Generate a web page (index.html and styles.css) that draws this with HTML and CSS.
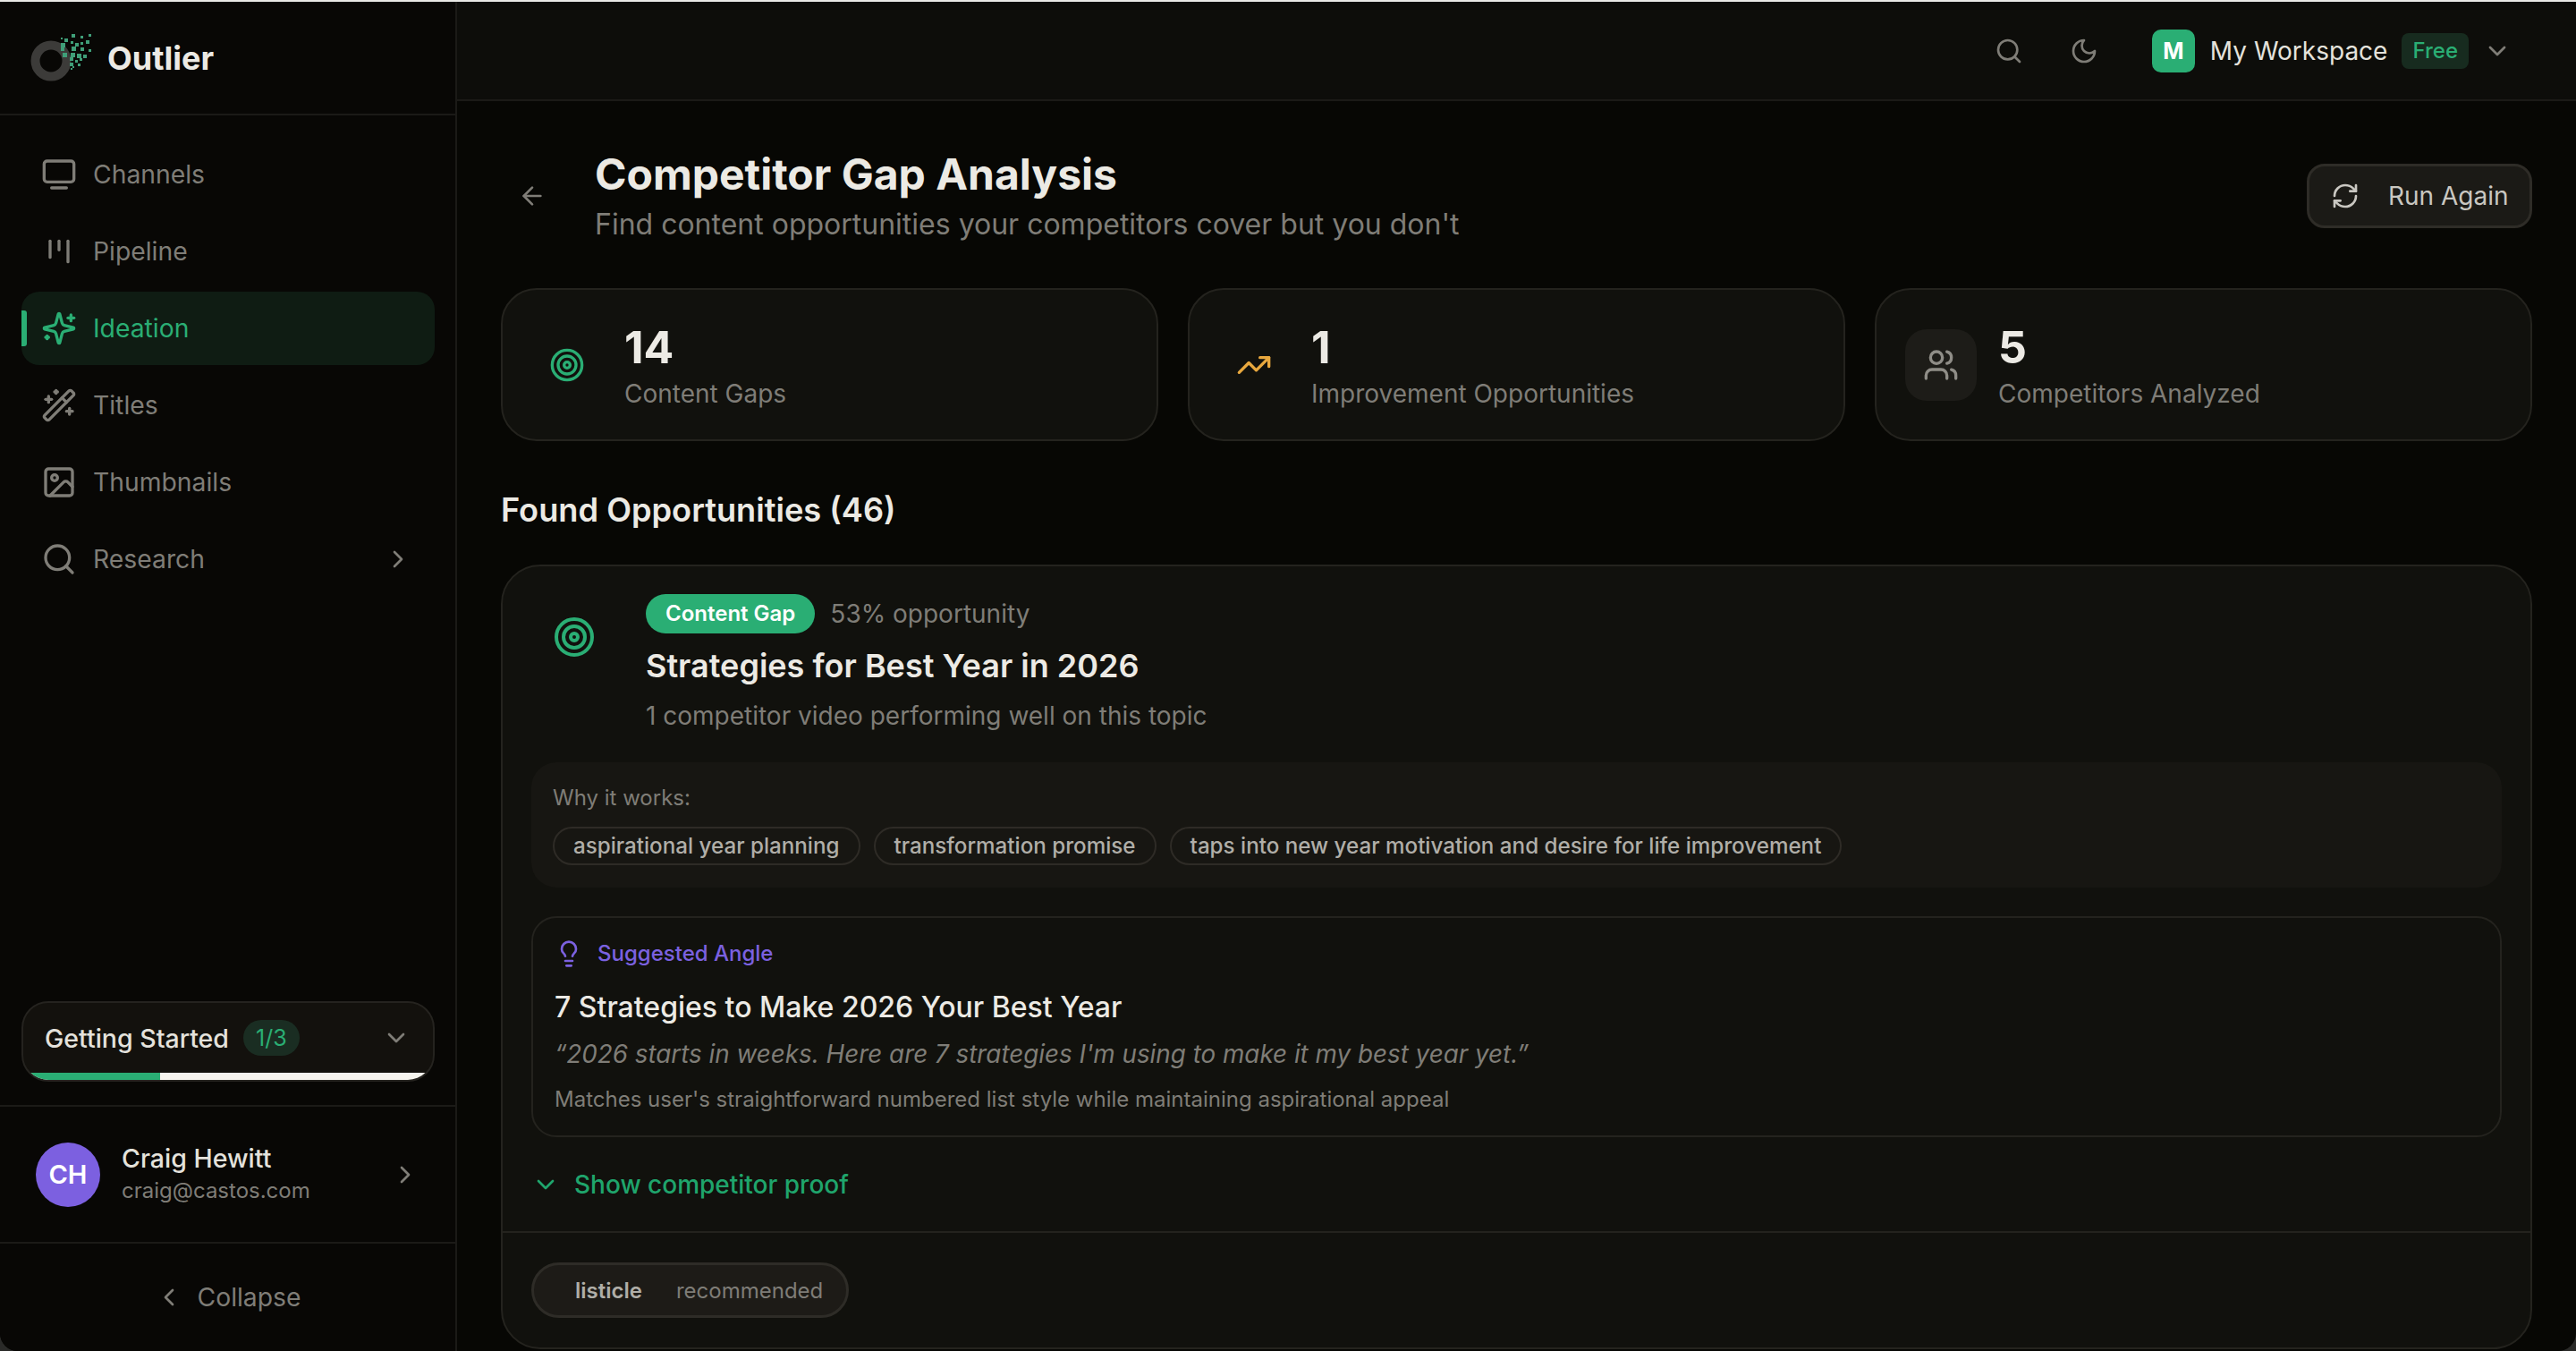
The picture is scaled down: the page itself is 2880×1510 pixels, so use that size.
FILE: index.html
```html
<!DOCTYPE html>
<html lang="en">
<head>
  <meta charset="UTF-8">
  <meta name="viewport" content="width=device-width, initial-scale=1.0">
  <title>Competitor Gap Analysis</title>
  <link rel="stylesheet" href="styles.css">
</head>
<body>
  <!-- icon sprite -->
  <svg class="sprite" aria-hidden="true">
    <symbol id="i-tv" viewBox="0 0 24 24"><path d="M7 21h10"/><rect width="20" height="14" x="2" y="3" rx="2"/></symbol>
    <symbol id="i-kanban" viewBox="0 0 24 24"><path d="M6 5v11"/><path d="M12 5v6"/><path d="M18 5v14"/></symbol>
    <symbol id="i-sparkles" viewBox="0 0 24 24"><path d="M9.937 15.5A2 2 0 0 0 8.5 14.063l-6.135-1.582a.5.5 0 0 1 0-.962L8.5 9.936A2 2 0 0 0 9.937 8.5l1.582-6.135a.5.5 0 0 1 .963 0L14.063 8.5A2 2 0 0 0 15.5 9.937l6.135 1.581a.5.5 0 0 1 0 .964L15.5 14.063a2 2 0 0 0-1.437 1.437l-1.582 6.135a.5.5 0 0 1-.963 0z"/><path d="M20 3v4"/><path d="M22 5h-4"/><path d="M4 17v2"/><path d="M5 18H3"/></symbol>
    <symbol id="i-wand" viewBox="0 0 24 24"><path d="m21.64 3.64-1.28-1.28a1.21 1.21 0 0 0-1.72 0L2.36 18.64a1.21 1.21 0 0 0 0 1.72l1.28 1.28a1.2 1.2 0 0 0 1.72 0L21.64 5.36a1.2 1.2 0 0 0 0-1.72"/><path d="m14 7 3 3"/><path d="M5 6v4"/><path d="M19 14v4"/><path d="M10 2v2"/><path d="M7 8H3"/><path d="M21 16h-4"/><path d="M11 3H9"/></symbol>
    <symbol id="i-image" viewBox="0 0 24 24"><rect width="18" height="18" x="3" y="3" rx="2"/><circle cx="9" cy="9" r="2"/><path d="m21 15-3.086-3.086a2 2 0 0 0-2.828 0L6 21"/></symbol>
    <symbol id="i-search" viewBox="0 0 24 24"><path d="m21 21-4.34-4.34"/><circle cx="11" cy="11" r="8"/></symbol>
    <symbol id="i-moon" viewBox="0 0 24 24"><path d="M12 3a6 6 0 0 0 9 9 9 9 0 1 1-9-9Z"/></symbol>
    <symbol id="i-down" viewBox="0 0 24 24"><path d="m6 9 6 6 6-6"/></symbol>
    <symbol id="i-right" viewBox="0 0 24 24"><path d="m9 18 6-6-6-6"/></symbol>
    <symbol id="i-left" viewBox="0 0 24 24"><path d="m15 18-6-6 6-6"/></symbol>
    <symbol id="i-refresh" viewBox="0 0 24 24"><path d="M3 12a9 9 0 0 1 9-9 9.75 9.75 0 0 1 6.74 2.74L21 8"/><path d="M21 3v5h-5"/><path d="M21 12a9 9 0 0 1-9 9 9.75 9.75 0 0 1-6.74-2.74L3 16"/><path d="M8 16H3v5"/></symbol>
    <symbol id="i-back" viewBox="0 0 24 24"><path d="m12 19-7-7 7-7"/><path d="M19 12H5"/></symbol>
    <symbol id="i-target" viewBox="0 0 24 24"><circle cx="12" cy="12" r="10"/><circle cx="12" cy="12" r="6"/><circle cx="12" cy="12" r="2"/></symbol>
    <symbol id="i-trend" viewBox="0 0 24 24"><path d="M16 7h6v6"/><path d="m22 7-8.5 8.5-5-5L2 17"/></symbol>
    <symbol id="i-users" viewBox="0 0 24 24"><path d="M16 21v-2a4 4 0 0 0-4-4H6a4 4 0 0 0-4 4v2"/><path d="M16 3.128a4 4 0 0 1 0 7.744"/><path d="M22 21v-2a4 4 0 0 0-3-3.87"/><circle cx="9" cy="7" r="4"/></symbol>
    <symbol id="i-bulb" viewBox="0 0 24 24"><path d="M15 14c.2-1 .7-1.7 1.5-2.5 1-.9 1.5-2.2 1.5-3.5A6 6 0 0 0 6 8c0 1 .2 2.2 1.5 3.5.7.7 1.3 1.5 1.5 2.5"/><path d="M9 18h6"/><path d="M10 22h4"/></symbol>
  </svg>

  <div class="app">
    <aside class="sidebar">
      <div class="brand">
        <svg class="brand-logo" viewBox="0 0 80 60" aria-hidden="true">
          <circle class="brand-ring" cx="27" cy="33" r="17.5"/>
          <path class="brand-dots" d="M50 3h4v4h-4zM42 8h4v4h-4zM38 13h5v5h-5zM66 10h4v4h-4zM60 5h3v3h-3zM69 3h3v3h-3zM54 13h4v4h-4zM50 17h5v5h-5zM60 18h4v4h-4zM38 18h4v4h-4zM40 24h5v5h-5zM49 24h5v5h-5zM56 25h5v5h-5zM63 26h4v4h-4zM48 29h4v4h-4zM54 32h3v3h-3zM59 30h3v3h-3zM48 35h4v4h-4zM57 36h3v3h-3zM69 20h3v3h-3zM38 7h2v2h-2zM49 11h3v3h-3zM60 12h3v3h-3zM51 39h2v2h-2zM49 41h2v2h-2z"/>
        </svg>
        <span class="brand-name">Outlier</span>
      </div>

      <nav class="nav">
        <a class="nav-link"><svg class="icon icon-40"><use href="#i-tv"/></svg>Channels</a>
        <a class="nav-link"><svg class="icon icon-40"><use href="#i-kanban"/></svg>Pipeline</a>
        <a class="nav-link active"><svg class="icon icon-40"><use href="#i-sparkles"/></svg>Ideation</a>
        <a class="nav-link"><svg class="icon icon-40"><use href="#i-wand"/></svg>Titles</a>
        <a class="nav-link"><svg class="icon icon-40"><use href="#i-image"/></svg>Thumbnails</a>
        <a class="nav-link"><svg class="icon icon-40"><use href="#i-search"/></svg>Research<svg class="icon icon-32 nav-arrow"><use href="#i-right"/></svg></a>
      </nav>

      <div class="getting-wrap">
        <div class="getting">
          <div class="getting-head">
            <span class="getting-title">Getting Started</span>
            <span class="getting-count">1/3</span>
            <svg class="icon icon-32 getting-arrow"><use href="#i-down"/></svg>
          </div>
          <div class="getting-bar"><div class="getting-fill" style="width:33.4%"></div></div>
        </div>
      </div>

      <div class="user">
        <div class="avatar">CH</div>
        <div class="user-info">
          <div class="user-name">Craig Hewitt</div>
          <div class="user-mail">craig@castos.com</div>
        </div>
        <svg class="icon icon-32 user-arrow"><use href="#i-right"/></svg>
      </div>

      <div class="collapse"><svg class="icon icon-32"><use href="#i-left"/></svg>Collapse</div>
    </aside>

    <div class="main">
      <header class="topbar">
        <svg class="icon icon-32 top-icon"><use href="#i-search"/></svg>
        <svg class="icon icon-32 top-icon"><use href="#i-moon"/></svg>
        <div class="workspace">
          <span class="ws-logo">M</span>
          <span class="ws-name">My Workspace</span>
          <span class="ws-plan">Free</span>
          <svg class="icon icon-32 ws-arrow"><use href="#i-down"/></svg>
        </div>
      </header>

      <main class="content">
        <div class="page-head">
          <div class="back"><svg class="icon icon-32"><use href="#i-back"/></svg></div>
          <div class="page-titles">
            <h1>Competitor Gap Analysis</h1>
            <p>Find content opportunities your competitors cover but you don't</p>
          </div>
          <button class="run-btn"><svg class="icon icon-32"><use href="#i-refresh"/></svg>Run Again</button>
        </div>

        <section class="stats">
          <div class="stat">
            <div class="stat-icon green"><svg class="icon icon-40"><use href="#i-target"/></svg></div>
            <div class="stat-text"><div class="stat-num">14</div><div class="stat-label">Content Gaps</div></div>
          </div>
          <div class="stat">
            <div class="stat-icon amber"><svg class="icon icon-40"><use href="#i-trend"/></svg></div>
            <div class="stat-text"><div class="stat-num">1</div><div class="stat-label">Improvement Opportunities</div></div>
          </div>
          <div class="stat">
            <div class="stat-icon grey"><svg class="icon icon-40"><use href="#i-users"/></svg></div>
            <div class="stat-text"><div class="stat-num">5</div><div class="stat-label">Competitors Analyzed</div></div>
          </div>
        </section>

        <h2 class="found">Found Opportunities (46)</h2>

        <article class="opp">
          <div class="opp-body">
            <div class="opp-head">
              <div class="opp-icon"><svg class="icon icon-48"><use href="#i-target"/></svg></div>
              <div>
                <div class="opp-meta">
                  <span class="opp-badge">Content Gap</span>
                  <span class="opp-score">53% opportunity</span>
                </div>
                <h3 class="opp-title">Strategies for Best Year in 2026</h3>
                <p class="opp-sub">1 competitor video performing well on this topic</p>
              </div>
            </div>

            <div class="why">
              <div class="why-label">Why it works:</div>
              <div class="chips">
                <span class="chip">aspirational year planning</span>
                <span class="chip">transformation promise</span>
                <span class="chip">taps into new year motivation and desire for life improvement</span>
              </div>
            </div>

            <div class="angle">
              <div class="angle-label"><svg class="icon icon-32"><use href="#i-bulb"/></svg>Suggested Angle</div>
              <div class="angle-title">7 Strategies to Make 2026 Your Best Year</div>
              <div class="angle-quote">“2026 starts in weeks. Here are 7 strategies I'm using to make it my best year yet.”</div>
              <div class="angle-note">Matches user's straightforward numbered list style while maintaining aspirational appeal</div>
            </div>

            <div class="proof"><svg class="icon icon-32"><use href="#i-down"/></svg>Show competitor proof</div>
          </div>

          <div class="opp-foot">
            <span class="format"><b>listicle</b><span>recommended</span></span>
          </div>
        </article>
      </main>
    </div>
  </div>
</body>
</html>
```

FILE: styles.css
```css
* {
  box-sizing: border-box;
}
html, body {
  margin: 0;
  height: 100%;
  background: #2a2a28;
}
body {
  font-family: Inter, 'Noto Sans', sans-serif;
  color: #eceae4;
  overflow: hidden;
}
h1, h2, h3, p {
  margin: 0;
}
.sprite {
  display: none;
}
.icon {
  flex: none;
  fill: none;
  stroke: currentColor;
  stroke-width: 2;
  stroke-linecap: round;
  stroke-linejoin: round;
}
.icon-32 { width: 32px; height: 32px; }
.icon-40 { width: 40px; height: 40px; }
.icon-48 { width: 48px; height: 48px; }

.app {
  display: flex;
  height: 1510px;
  border-top: 2px solid #e9e9e6;
  border-radius: 0 0 20px 20px;
  background: #070704;
  overflow: hidden;
}

/* sidebar */
.sidebar {
  display: flex;
  flex-direction: column;
  flex: none;
  width: 511px;
  background: #080705;
  border-right: 2px solid #1b1a17;
}
.brand {
  display: flex;
  align-items: center;
  gap: 10px;
  height: 127px;
  padding-left: 30px;
  border-bottom: 2px solid #1b1a17;
}
.brand-logo {
  width: 80px;
  height: 60px;
}
.brand-ring {
  fill: none;
  stroke: #3c3b39;
  stroke-width: 10;
}
.brand-dots {
  fill: #3f9e78;
}
.brand-name {
  font-size: 36px;
  font-weight: 700;
  color: #eceae4;
}
.nav {
  padding: 25px 23px 0 24px;
}
.nav-link {
  position: relative;
  display: flex;
  align-items: center;
  gap: 18px;
  height: 82px;
  margin-bottom: 4px;
  padding: 0 25px 0 22px;
  border-radius: 20px;
  font-size: 28.3px;
  color: #7f7d77;
}
.nav-link.active {
  background: #0f1c13;
  color: #2aae74;
}
.nav-link.active::before {
  content: '';
  position: absolute;
  left: 0;
  top: 21px;
  width: 6px;
  height: 40px;
  border-radius: 0 3px 3px 0;
  background: #2aae74;
}
.nav-arrow {
  margin-left: auto;
}
.getting-wrap {
  margin-top: auto;
  padding: 0 23px 26px 24px;
  border-bottom: 2px solid #1b1a17;
}
.getting {
  height: 90px;
  background: #13110d;
  border: 2px solid #25231f;
  border-radius: 30px;
  overflow: hidden;
}
.getting-head {
  display: flex;
  align-items: center;
  height: 78px;
  padding: 0 25px 0 24px;
}
.getting-title {
  font-size: 28.5px;
  font-weight: 500;
  color: #e4e2dc;
}
.getting-count {
  margin-left: 16px;
  padding: 0 14px;
  height: 40px;
  line-height: 40px;
  border-radius: 20px;
  background: #1a2d22;
  color: #2aae74;
  font-size: 25px;
}
.getting-arrow {
  margin-left: auto;
  color: #7f7d77;
}
.getting-bar {
  height: 10px;
  background: #f6f4ee;
}
.getting-fill {
  height: 100%;
  background: #2aae74;
}
.user {
  display: flex;
  align-items: center;
  gap: 24px;
  height: 153px;
  padding: 0 40px;
  border-bottom: 2px solid #1b1a17;
}
.avatar {
  display: flex;
  align-items: center;
  justify-content: center;
  flex: none;
  width: 72px;
  height: 72px;
  border-radius: 50%;
  background: #7c60e0;
  color: #fff;
  font-size: 29px;
  font-weight: 600;
}
.user-name {
  font-size: 28.5px;
  font-weight: 500;
  line-height: 36px;
  color: #e4e2dc;
}
.user-mail {
  font-size: 24px;
  line-height: 36px;
  color: #7f7d77;
}
.user-arrow {
  margin-left: auto;
  color: #7f7d77;
}
.collapse {
  display: flex;
  align-items: center;
  justify-content: center;
  gap: 16px;
  height: 120px;
  font-size: 28.3px;
  color: #7f7d77;
}

/* top bar */
.main {
  flex: 1;
  min-width: 0;
}
.topbar {
  display: flex;
  align-items: center;
  justify-content: flex-end;
  height: 111px;
  padding-right: 72px;
  background: #0d0d0a;
  border-bottom: 2px solid #1b1a17;
}
.top-icon {
  margin-right: 52px;
  color: #7f7d77;
}
.workspace {
  display: flex;
  align-items: center;
  margin-left: 8px;
}
.ws-logo {
  display: flex;
  align-items: center;
  justify-content: center;
  width: 48px;
  height: 48px;
  border-radius: 10px;
  background: #2aae74;
  color: #fff;
  font-size: 25px;
  font-weight: 700;
}
.ws-name {
  margin-left: 17px;
  font-size: 28px;
  color: #e4e2dc;
}
.ws-plan {
  margin-left: 16px;
  padding: 0 12px;
  height: 40px;
  line-height: 40px;
  border-radius: 8px;
  background: #172b1f;
  color: #2aae74;
  font-size: 24px;
  font-weight: 500;
}
.ws-arrow {
  margin-left: 16px;
  color: #7f7d77;
}

/* page */
.content {
  padding: 50px 49px 0;
}
.page-head {
  display: flex;
  align-items: center;
  height: 111px;
}
.back {
  display: flex;
  align-items: center;
  justify-content: center;
  flex: none;
  width: 70px;
  margin-right: 35px;
  color: #7f7d77;
}
.page-titles {
  flex: 1;
  padding-top: 3px;
}
h1 {
  font-size: 48px;
  font-weight: 700;
  line-height: 60px;
  color: #eceae4;
}
.page-titles p {
  font-size: 32px;
  line-height: 51px;
  color: #7f7d77;
}
.run-btn {
  display: flex;
  align-items: center;
  gap: 32px;
  flex: none;
  width: 252px;
  height: 72px;
  padding: 0 24px;
  border: 3px solid #2e2c27;
  border-radius: 20px;
  background: #1b1a16;
  color: #c9c7c1;
  font-family: inherit;
  font-size: 28px;
  white-space: nowrap;
}
.stats {
  display: grid;
  grid-template-columns: repeat(3, 1fr);
  gap: 33px;
  margin-top: 48px;
}
.stat {
  display: flex;
  align-items: center;
  gap: 24px;
  height: 171px;
  padding: 0 32px;
  background: #11110d;
  border: 2px solid #24231e;
  border-radius: 40px;
}
.stat-icon {
  display: flex;
  align-items: center;
  justify-content: center;
  flex: none;
  width: 80px;
  height: 80px;
  border-radius: 24px;
}
.stat-icon.green { color: #2aae74; }
.stat-icon.amber { color: #e8a83e; }
.stat-icon.grey { color: #8f8d87; background: #1d1c18; }
.stat-text {
  padding-top: 3px;
}
.stat-num {
  font-size: 50px;
  font-weight: 700;
  line-height: 58px;
  color: #eceae4;
}
.stat-label {
  margin-top: 3px;
  font-size: 28px;
  line-height: 40px;
  color: #7f7d77;
}
.found {
  margin-top: 55px;
  font-size: 36.2px;
  font-weight: 600;
  line-height: 44px;
  color: #eceae4;
}

/* opportunity card */
.opp {
  margin-top: 39px;
  background: #11110d;
  border: 2px solid #24231e;
  border-radius: 44px;
}
.opp-body {
  padding: 31px 32px 32px;
  border-bottom: 2px solid #24231e;
}
.opp-head {
  display: flex;
  gap: 32px;
}
.opp-icon {
  display: flex;
  align-items: center;
  justify-content: center;
  flex: none;
  width: 96px;
  height: 96px;
  color: #2aae74;
}
.opp-meta {
  display: flex;
  align-items: center;
  gap: 17px;
}
.opp-badge {
  height: 44px;
  padding: 0 22px;
  line-height: 44px;
  border-radius: 22px;
  background: #2aae74;
  color: #fff;
  font-size: 24px;
  font-weight: 600;
}
.opp-score {
  font-size: 28px;
  color: #7f7d77;
}
.opp-title {
  margin-top: 14px;
  font-size: 36px;
  font-weight: 600;
  line-height: 44px;
  color: #eceae4;
}
.opp-sub {
  margin-top: 14px;
  font-size: 28px;
  line-height: 40px;
  color: #7f7d77;
}
.why {
  margin-top: 32px;
  padding: 22px 24px 25px;
  background: #171612;
  border-radius: 28px;
}
.why-label {
  font-size: 24px;
  line-height: 36px;
  color: #7f7d77;
}
.chips {
  display: flex;
  gap: 15px;
  margin-top: 14px;
}
.chip {
  height: 43px;
  padding: 0 21px;
  line-height: 39px;
  border: 2px solid #2e2b26;
  border-radius: 22px;
  color: #b0aea8;
  font-size: 24.2px;
  font-weight: 500;
}
.angle {
  margin-top: 32px;
  padding: 22px 24px;
  border: 2px solid #24231e;
  border-radius: 28px;
}
.angle-label {
  display: flex;
  align-items: center;
  gap: 16px;
  line-height: 36px;
  font-size: 24px;
  font-weight: 500;
  color: #7b61e0;
}
.angle-title {
  margin-top: 20px;
  font-size: 32px;
  font-weight: 500;
  line-height: 44px;
  color: #eceae4;
}
.angle-quote {
  margin-top: 10px;
  font-size: 27.8px;
  font-style: italic;
  line-height: 40px;
  color: #7f7d77;
}
.angle-note {
  margin-top: 13px;
  font-size: 24px;
  line-height: 36px;
  color: #7f7d77;
}
.proof {
  display: flex;
  align-items: center;
  gap: 16px;
  margin-top: 33px;
  font-size: 28px;
  font-weight: 500;
  line-height: 40px;
  color: #1fa56c;
}
.opp-foot {
  padding: 33px 32px;
}
.format {
  display: inline-flex;
  align-items: center;
  gap: 38px;
  height: 62px;
  padding: 0 26px 0 46px;
  background: #1d1b17;
  border: 3px solid #2e2c27;
  border-radius: 31px;
  font-size: 24px;
  color: #7f7d77;
}
.format b {
  font-weight: 600;
  color: #b0aea8;
}
```
